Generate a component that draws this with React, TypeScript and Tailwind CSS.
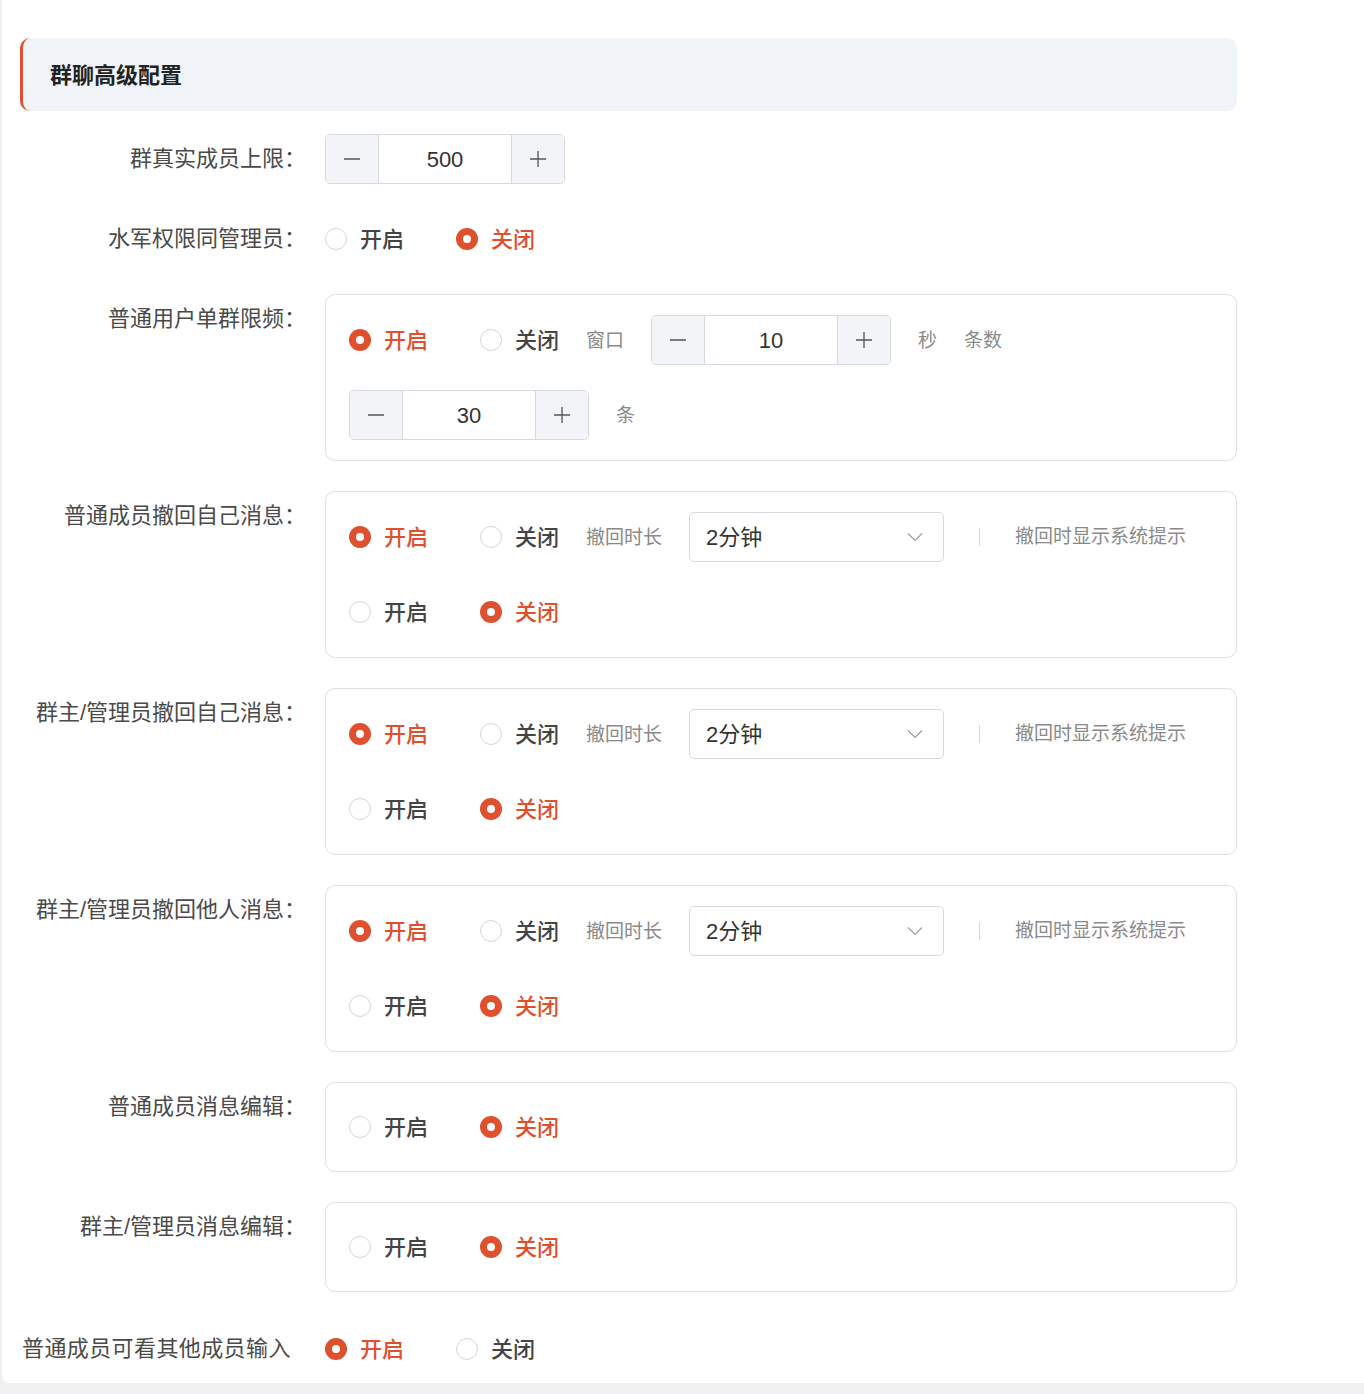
import React from 'react';

const ORANGE = 'text-[#de502e]';

const Radio: React.FC<{ checked?: boolean; label: string }> = ({ checked, label }) => (
  <label className="flex items-center gap-[13px] cursor-pointer">
    {checked ? (
      <span className="w-[22px] h-[22px] rounded-full bg-[#de502e] flex items-center justify-center">
        <span className="w-[8px] h-[8px] rounded-full bg-white" />
      </span>
    ) : (
      <span className="w-[22px] h-[22px] rounded-full border border-[#d3d6dd] bg-white" />
    )}
    <span className={`text-[22px] font-medium ${checked ? ORANGE : 'text-[#444]'}`}>{label}</span>
  </label>
);

// 开启 / 关闭 pair
const OnOff: React.FC<{ on: boolean }> = ({ on }) => (
  <div className="flex items-center gap-[52px]">
    <Radio checked={on} label="开启" />
    <Radio checked={!on} label="关闭" />
  </div>
);

const Stepper: React.FC<{ value: number }> = ({ value }) => (
  <div className="flex h-[50px] w-[240px] rounded-[5px] border border-[#d6d9e0] overflow-hidden">
    <button className="w-[53px] bg-[#f2f4f8] border-r border-[#d6d9e0] flex items-center justify-center">
      <svg width="18" height="18" viewBox="0 0 18 18" fill="none" stroke="#555" strokeWidth="1.3">
        <path d="M1 9h16" />
      </svg>
    </button>
    <div className="flex-1 bg-white flex items-center justify-center text-[22px] text-[#333]">{value}</div>
    <button className="w-[53px] bg-[#f2f4f8] border-l border-[#d6d9e0] flex items-center justify-center">
      <svg width="18" height="18" viewBox="0 0 18 18" fill="none" stroke="#555" strokeWidth="1.3">
        <path d="M1 9h16M9 1v16" />
      </svg>
    </button>
  </div>
);

const Hint: React.FC<{ children: React.ReactNode }> = ({ children }) => (
  <span className="text-[19px] text-[#8a8a8a] pt-[3px]">{children}</span>
);

const Select: React.FC<{ value: string }> = ({ value }) => (
  <div className="w-[255px] h-[50px] rounded-[5px] border border-[#d6d9e0] bg-white flex items-center justify-between pl-[16px] pr-[20px]">
    <span className="text-[22px] text-[#333]">{value}</span>
    <svg width="16" height="10" viewBox="0 0 16 10" fill="none" stroke="#9a9da4" strokeWidth="1.2">
      <path d="M1 1.5l7 7 7-7" />
    </svg>
  </div>
);

const FormItem: React.FC<{ label: string; children: React.ReactNode }> = ({ label, children }) => (
  <div className="flex">
    <div className="w-[305px] shrink-0 pr-[19px] text-right leading-[50px] text-[22px] text-[#4a4a4a]">{label}</div>
    <div className="flex-1">{children}</div>
  </div>
);

const Box: React.FC<{ children: React.ReactNode; tall?: boolean }> = ({ children, tall }) => (
  <div
    className={`border border-[#dcdfe6] rounded-[10px] px-[23px] flex flex-col gap-[25px] ${tall ? 'py-[20px]' : 'py-[19px]'}`}
  >
    {children}
  </div>
);

const Row: React.FC<{ children: React.ReactNode }> = ({ children }) => (
  <div className="h-[50px] flex items-center gap-[27px]">{children}</div>
);

const RecallBox: React.FC = () => (
  <Box tall>
    <Row>
      <OnOff on={true} />
      <Hint>撤回时长</Hint>
      <Select value="2分钟" />
      <span className="ml-[8px] w-px h-[18px] bg-[#d3d6dc]" />
      <span className="ml-[8px]">
        <Hint>撤回时显示系统提示</Hint>
      </span>
    </Row>
    <Row>
      <OnOff on={false} />
    </Row>
  </Box>
);

const App: React.FC = () => {
  return (
    <div
      className="min-h-screen bg-[#eef0f2] pl-[2px] pb-[11px]"
      style={{ fontFamily: '"Liberation Sans", "Noto Sans CJK SC", sans-serif' }}
    >
      <div className="bg-white rounded-bl-[8px] pt-[38px] pl-[18px] pb-[9px]">
        <div className="w-[1217px]">
          {/* Header */}
          <div className="h-[73px] bg-[#f0f3f7] rounded-[10px] border-l-[3px] border-[#de502e] flex items-center pl-[27px]">
            <h1 className="text-[22px] font-bold text-[#222] pt-[2px]">群聊高级配置</h1>
          </div>

          <div className="mt-[23px] flex flex-col gap-[30px]">
            <FormItem label="群真实成员上限：">
              <Stepper value={500} />
            </FormItem>

            <FormItem label="水军权限同管理员：">
              <div className="h-[50px] flex items-center">
                <OnOff on={false} />
              </div>
            </FormItem>

            <FormItem label="普通用户单群限频：">
              <Box tall>
                <Row>
                  <OnOff on={true} />
                  <Hint>窗口</Hint>
                  <Stepper value={10} />
                  <Hint>秒</Hint>
                  <Hint>条数</Hint>
                </Row>
                <Row>
                  <Stepper value={30} />
                  <Hint>条</Hint>
                </Row>
              </Box>
            </FormItem>

            <FormItem label="普通成员撤回自己消息：">
              <RecallBox />
            </FormItem>

            <FormItem label="群主/管理员撤回自己消息：">
              <RecallBox />
            </FormItem>

            <FormItem label="群主/管理员撤回他人消息：">
              <RecallBox />
            </FormItem>

            <FormItem label="普通成员消息编辑：">
              <Box>
                <Row>
                  <OnOff on={false} />
                </Row>
              </Box>
            </FormItem>

            <FormItem label="群主/管理员消息编辑：">
              <Box>
                <Row>
                  <OnOff on={false} />
                </Row>
              </Box>
            </FormItem>

            <div className="flex mt-[2px]">
              <div className="w-[305px] shrink-0 pl-[2px] leading-[50px] text-[22px] tracking-[0.4px] text-[#4a4a4a]">
                普通成员可看其他成员输入
              </div>
              <div className="h-[50px] flex items-center">
                <OnOff on={true} />
              </div>
            </div>
          </div>
        </div>
      </div>
    </div>
  );
};

export default App;
